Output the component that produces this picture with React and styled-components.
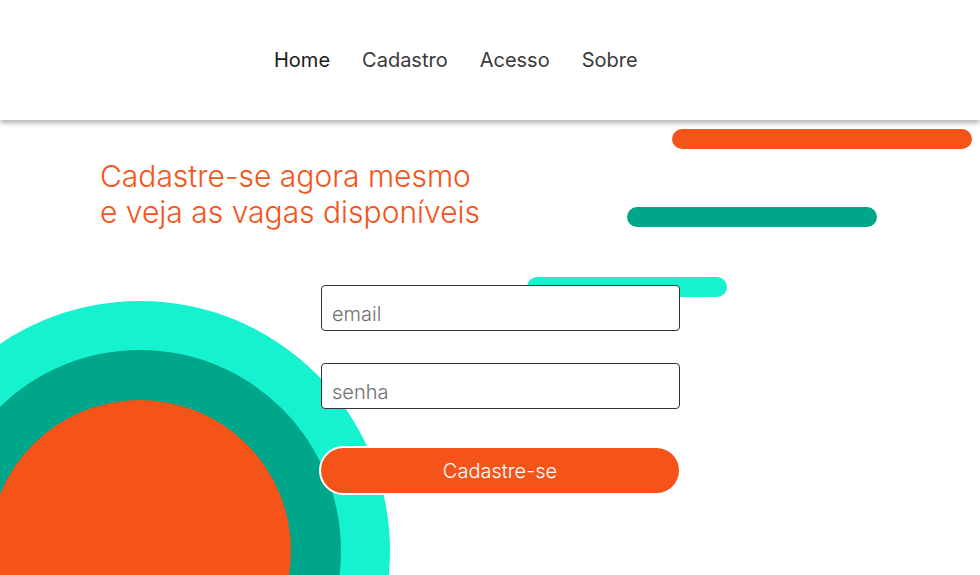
import React from 'react';
import styled, { createGlobalStyle } from 'styled-components';

const orange = '#f4541a';
const teal = '#00a68a';
const cyan = '#16f2d0';

const GlobalStyle = createGlobalStyle`
  html, body {
    margin: 0;
    padding: 0;
    background: #fff;
    font-family: Inter, "Noto Sans", sans-serif;
  }
  * { box-sizing: border-box; }
`;

const Page = styled.div`
  position: relative;
  width: 980px;
  height: 575px;
  overflow: hidden;
  background: #fff;
`;

const Header = styled.header`
  position: relative;
  z-index: 3;
  height: 120px;
  background: #fff;
  box-shadow: 0 3px 5px rgba(0, 0, 0, 0.3);
  display: flex;
  align-items: center;
  padding-left: 274px;
`;

const Nav = styled.nav`
  display: flex;
  gap: 32px;
`;

const NavLink = styled.a`
  font-size: 20px;
  font-weight: 400;
  color: ${({ active }) => (active ? '#1a1a1a' : '#3a3a3a')};
  text-decoration: none;
  cursor: pointer;
`;

const Main = styled.main`
  position: relative;
  padding: 38px 0 0 100px;
`;

const Title = styled.h1`
  position: relative;
  z-index: 2;
  margin: 0;
  font-size: 30px;
  line-height: 36px;
  font-weight: 300;
  color: ${orange};
`;

const Form = styled.form`
  position: relative;
  z-index: 2;
  display: flex;
  flex-direction: column;
  width: 361px;
  margin: 55px 0 0 219px;
`;

const Input = styled.input`
  width: 359px;
  height: 46px;
  margin-left: 2px;
  margin-bottom: ${({ last }) => (last ? '37px' : '32px')};
  padding: 12px 10px 0;
  border: 1px solid #333;
  border-radius: 4px;
  background: #fff;
  font-family: Inter, "Noto Sans", sans-serif;
  font-size: 20px;
  font-weight: 300;
  color: #333;
  outline: none;

  &::placeholder {
    color: #707070;
  }
`;

const Button = styled.button`
  width: 362px;
  height: 49px;
  border: 2px solid #fff;
  border-radius: 25px;
  background: ${orange};
  color: #fff;
  font-family: Inter, "Noto Sans", sans-serif;
  font-size: 20px;
  font-weight: 300;
  cursor: pointer;
`;

const Bar = styled.div`
  position: absolute;
  z-index: 1;
  height: 20px;
  border-radius: 10px;
  background: ${({ color }) => color};
  left: ${({ x }) => x}px;
  top: ${({ y }) => y}px;
  width: ${({ w }) => w}px;
`;

const Circle = styled.div`
  position: absolute;
  z-index: 1;
  border-radius: 50%;
  background: ${({ color }) => color};
  width: ${({ r }) => r * 2}px;
  height: ${({ r }) => r * 2}px;
  left: ${({ r }) => 140 - r}px;
  top: ${({ r }) => 551 - r}px;
`;

export default function App() {
  return (
    <>
      <GlobalStyle />
      <Page>
        <Header>
          <Nav>
            <NavLink active>Home</NavLink>
            <NavLink>Cadastro</NavLink>
            <NavLink>Acesso</NavLink>
            <NavLink>Sobre</NavLink>
          </Nav>
        </Header>
        <Bar color={orange} x={672} y={129} w={300} />
        <Bar color={teal} x={627} y={207} w={250} />
        <Bar color={cyan} x={527} y={277} w={200} />
        <Circle color={cyan} r={250} />
        <Circle color={teal} r={201} />
        <Circle color={orange} r={151} />
        <Main>
          <Title>
            Cadastre-se agora mesmo
            <br />
            e veja as vagas disponíveis
          </Title>
          <Form onSubmit={e => e.preventDefault()}>
            <Input type="email" placeholder="email" />
            <Input type="password" placeholder="senha" last />
            <Button type="submit">Cadastre-se</Button>
          </Form>
        </Main>
      </Page>
    </>
  );
}
